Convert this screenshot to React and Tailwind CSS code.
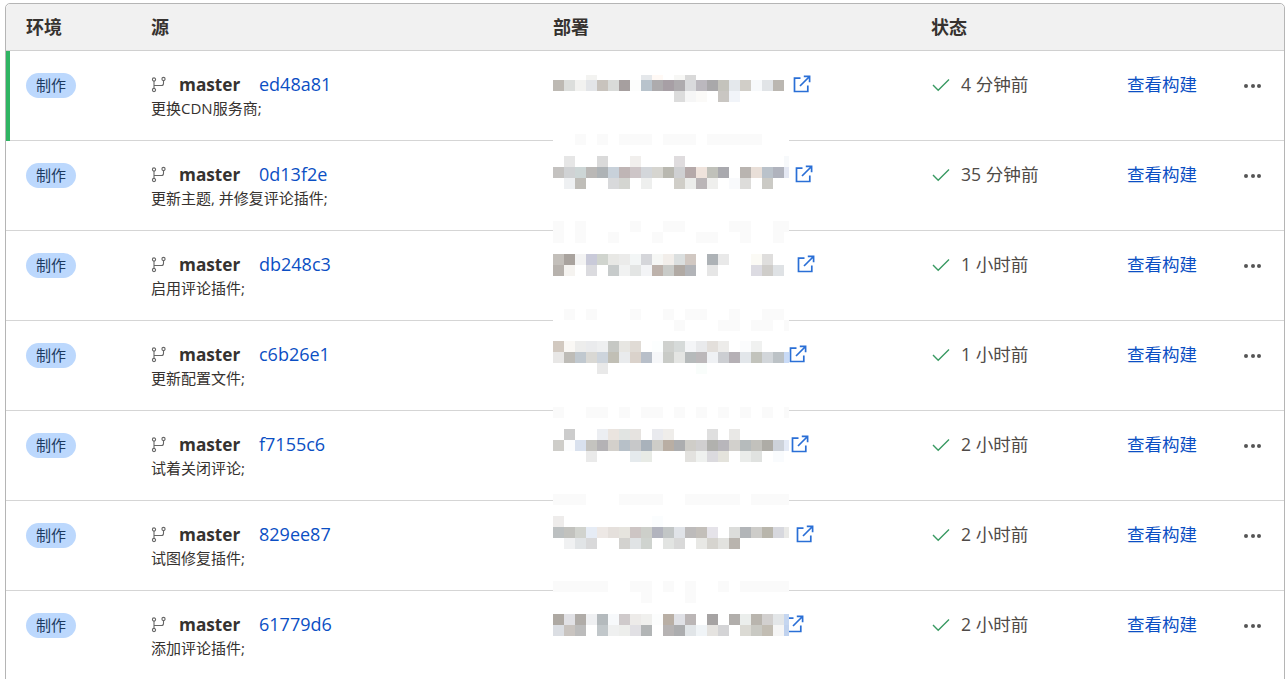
const FONT = "font-['Open_Sans','Noto_Sans_CJK_SC',sans-serif]";

// pixelated url blocks, each band: y from row top, cells by column
const MASK = '#fafafa';
const W = 236;

const ROWS = [
    {
        hash: 'ed48a81', msg: '更换CDN服务商;', time: '4 分钟前', gap: 'w-[240px]',
        masks: [],
        bands: [
            [24, 5, { 3: 'f3f3f1', 8: 'e5e8eb', 9: 'fff9f5', 11: 'f7f7f5', 12: 'd9d9d9' }],
            [29, 11, 'bdb9b3 dcdedc f2f2f0 e3e5e8 c8c3bd d9dbd9 a69f9f fcfdfc b8c3cc adabad a79fa5 aeabae d9dadc bbb8be a9a8aa c4c3bc e4e8ec d1cec8 f7f9fb e1e4e7 bbb7b1'],
            [40, 11, { 11: 'dcdcdc', 12: 'f6f6f6', 13: 'fbfaf8', 15: 'c9c6c2', 16: 'f1f4f9' }],
        ],
    },
    {
        hash: '0d13f2e', msg: '更新主题, 并修复评论插件;', time: '35 分钟前', gap: 'w-[242px]',
        masks: [[-7, [2, 4, 6, 7, 8, 10, 11, 12, 14, 15, 16, 17, 18]]],
        bands: [
            [15, 11, { 1: 'e6e6e6', 4: 'dadada', 7: 'f1efed', 11: 'dfdcde', 21: 'f7f9fb' }],
            [26, 11, 'c4c2c0 d0d2d4 cdd6d6 bab8b6 aeb3b6 c8d1da bfb5b5 cdc5c7 d3d6da d6d5d0 b9b8b0 cfd0d2 b5a9a9 efe3dc c0c1ba a9a9ae ffffff b9b4b0 e9dfd8 bac2ca b0b3bd e4e8f3'],
            [37, 11, { 1: 'eef0f2', 2: 'bfbdb8', 5: 'd8d9db', 6: 'd4d5d1', 8: 'eeefee', 11: 'd0cec8', 12: 'ecedeb', 13: 'bab5b7', 14: 'efefed', 16: 'f9fafc', 17: 'dddcda', 19: 'cbcac5' }],
        ],
    },
    {
        hash: 'db248c3', msg: '启用评论插件;', time: '1 小时前', gap: 'w-[244px]',
        masks: [[-10, [0, 2, 7, 10, 11, 16, 17, 20, 21]], [1, [0, 2, 5, 9, 13, 14, 17, 20]]],
        bands: [
            [23, 11, 'c3bfba a9a39e f3f3f3 c9cad9 d0d4ce e8e8e5 ebebea f3f6f6 d5d6da f6f7f5 f2eeea dbdfdf d1c8c2 ffffff adb2b6 e9e9e9 ffffff ffffff fbfaf5 dfdedd ffffff'],
            [34, 11, 'b7b2ad f5f3f0 ffffff dbdbdf ffffff c7cbcb f1f2f2 e3e5e4 f3f4f6 bdb2ab c9cbc8 b1aaa4 b2b4b8 ffffff e6e6e6 ffffff ffffff ffffff dcdbe2 cfcdca dfe2e5'],
        ],
    },
    {
        hash: 'c6b26e1', msg: '更新配置文件;', time: '1 小时前', gap: 'w-[236px]',
        masks: [[-12, [1, 3, 7, 10, 12, 13, 16, 19, 20]], [-1, [11, 15, 16, 18, 19, 21]]],
        bands: [
            [20, 11, 'd2c9c0 faf8f5 ededec eaebed eeeff0 c6c8c4 e7e6e2 e0dbd5 ffffff fcfefe cfd1ce d6dad9 f4f5f7 e9eaec e3dfdb edecea ffffff fbfcfd f0f1f0 ffffff ffffff'],
            [31, 11, 'e8e7e6 bebcb7 c0c8cf d9d8d4 cdd4dc c1bfb5 e9ebed dad2cb b8bfc9 f6f7f9 c9cbc7 e4e5e3 b6babb bcb8ba eff1f4 ccced2 b5b0b5 e2e6ea c2c3bc d2d6da bcc2c6 c8daf6'],
            [42, 11, { 4: 'e9e9e9', 13: 'f9fdfb' }],
        ],
    },
    {
        hash: 'f7155c6', msg: '试着关闭评论;', time: '2 小时前', gap: 'w-[238px]',
        masks: [[-4, [0, 3, 4, 6, 8, 9, 11, 13, 15, 17, 19, 21]]],
        bands: [
            [18, 11, { 1: 'cccccc', 4: 'eceef2', 5: 'eae4df', 6: 'e1e4e2', 7: 'e6e3e0', 9: 'e9eaee', 10: 'efedea', 14: 'dfdfdf', 16: 'e9e8e6' }],
            [29, 11, 'cecdc9 fbfcfd d9e1ee c4c3bf b4b2b5 d3d0cb b7c0c8 c7c8c9 a9b2bb cecdc8 b9aea3 acadaf cfcdc8 d0cfd0 b1b1ae b8b6bb d2d0cc b6bbbc c2c1bc aeaca6 cdd2da e4eaf6'],
            [40, 11, { 3: 'eaeaea', 7: 'e5eaed', 8: 'e8ebe6', 12: 'e3e2df', 13: 'eff1ef', 14: 'dbdade', 15: 'e4e3dc', 17: 'eaecea', 18: 'e0e2e0', 20: 'f9fbfd' }],
        ],
    },
    {
        hash: '829ee87', msg: '试图修复插件;', time: '2 小时前', gap: 'w-[243px]',
        masks: [[-7, [0, 1, 2, 6, 7, 8, 9, 12, 13, 14, 15, 16, 18, 19, 20, 21]]],
        bands: [
            [15, 11, { 0: 'eeeceb', 9: 'fbfdfe' }],
            [26, 11, 'bcc0c1 c2c2be d1d3ce e6ecf5 ede8e5 e5e0dc e6e4de cdc5c4 cdcfca b2b4be c2c6c6 e0e3e8 bdbbbb c3bfba e5e3e9 ffffff dcdddb b2b5b8 cdccc9 b9b6ac d7d8de e9e9e7'],
            [37, 11, { 1: 'f0f1f2', 2: 'e1e4e6', 3: 'd9d9da', 6: 'd3d2cf', 7: 'e0e3e5', 8: 'cfd3cf', 10: 'e2e4e2', 11: 'd9d9d9', 13: 'e8e8e5', 14: 'd6d4cf', 15: 'e2e2df', 16: 'b9b4ae' }],
        ],
    },
    {
        hash: '61779d6', msg: '添加评论插件;', time: '2 小时前', gap: 'w-[233px]',
        masks: [[-10, [0, 1, 2, 3, 4, 7, 8, 10, 12, 15, 17, 18, 19, 20, 21]], [1, [8, 12]]],
        bands: [
            [23, 11, 'aea9a3 e1e1e5 b0aca8 eff0f2 b4babd f7f9fb cfcacb edebe9 f0f0ee fcfdfd b9afa5 e0e1e6 bbb6b6 ffffff a6a3a3 ffffff b1aeab ebeeec b9b5ae d2d0cf e3e6e8 c5d6f0'],
            [34, 11, 'dbdee3 c9c4c0 bcbcbc ffffff c1c7ca eff0f0 edeeec e1e0e4 b2b5b6 ffffff b6b3b3 acadaf e1e5e8 f0f4f7 e5e3e0 d4d4d6 ffffff dbdad4 c9c9c3 c2bdb3 f5f5f5 c0d2ee'],
        ],
    },
];

function bandCells(cells) {
    if (typeof cells === 'string') return cells.split(' ').map((c, i) => [i, c]);
    return Object.entries(cells).map(([i, c]) => [Number(i), c]);
}

function Mosaic({ masks, bands }) {
    // drawn from 20px above the row so it can cover the divider
    const off = 20;
    return (
        <svg className="absolute left-0 z-10" style={{ top: -22 - off }} width={W} height={110} aria-hidden="true">
            {masks.map(([y, cols], m) => (
                <g key={m}>
                    <rect x="0" y={y + off} width={W} height="11" fill="#fff" />
                    {cols.map((c) => (
                        <rect key={c} x={c * 11} y={y + off} width={c === 21 ? 5 : 11} height="11" fill={MASK} />
                    ))}
                </g>
            ))}
            {bands.map(([y, h, cells], b) =>
                bandCells(cells).map(([c, color]) => (
                    <rect key={`${b}-${c}`} x={c * 11} y={y + off} width={c === 21 ? 5 : 11} height={h} fill={`#${color}`} />
                )),
            )}
        </svg>
    );
}

function BranchIcon() {
    return (
        <svg width="16" height="17" viewBox="0 0 16 17" fill="none" stroke="#666" strokeWidth="1.1" className="mt-[3px] shrink-0">
            <circle cx="3" cy="3.5" r="1.6" />
            <circle cx="3" cy="14" r="1.6" />
            <circle cx="12.5" cy="3" r="1.6" />
            <path d="M3 5.1v7.3M3 9.5h7.5a2 2 0 0 0 2-2V4.6" />
        </svg>
    );
}

function ExternalIcon() {
    return (
        <svg width="18" height="18" viewBox="0 0 18 18" fill="none" stroke="#2a6fd6" strokeWidth="1.7" className="mt-[2px] shrink-0">
            <path d="M7.5 3.2H1.5v13.3h13.3v-6" />
            <path d="M7 11 16 2M10.8 1.4h5.8v5.8" />
        </svg>
    );
}

function CheckIcon() {
    return (
        <svg width="18" height="14" viewBox="0 0 18 14" fill="none" stroke="#3a9a63" strokeWidth="1.4" className="ml-px">
            <path d="M1 7l5.2 5.2L17 1.6" />
        </svg>
    );
}

function Row({ row, live }) {
    return (
        <div className="relative grid h-[90px] grid-cols-[125px_402px_378px_196px_1fr] border-b border-[#d5d5d5] pl-5 pt-[22px]">
            {live && <div className="absolute -bottom-px left-0 top-0 w-1 bg-[#2fb463]" />}
            <div>
                <span className="inline-flex h-[25px] w-[50px] items-center justify-center rounded-full bg-[#bcd8fd] text-[15px] text-[#1d3a5f]">
                    制作
                </span>
            </div>
            <div>
                <div className="flex h-[25px] items-start">
                    <BranchIcon />
                    <span className="ml-[12px] w-[60px] text-[17.2px] font-bold leading-[23px] text-[#36322f]">master</span>
                    <a className="ml-5 text-[18px] leading-[23px] text-[#0b4fc4]">{row.hash}</a>
                </div>
                <div className="text-[15px] leading-[20px] text-[#36322f]">{row.msg}</div>
            </div>
            <div className="relative">
                <Mosaic masks={row.masks} bands={row.bands} />
                <div className="flex h-[22px] items-start">
                    <div className={row.gap} />
                    <ExternalIcon />
                </div>
            </div>
            <div className="flex h-[23px] items-center">
                <CheckIcon />
                <span className="ml-[11px] text-[17.6px] leading-[23px] text-[#4f4b47]">{row.time}</span>
            </div>
            <div className="flex h-[23px] items-center">
                <a className="text-[17.5px] leading-[23px] text-[#0b4fc4]">查看构建</a>
                <span className="ml-[47px] mt-[3px] flex gap-[2.5px]">
                    <i className="size-[4px] rounded-full bg-[#555]" />
                    <i className="size-[4px] rounded-full bg-[#555]" />
                    <i className="size-[4px] rounded-full bg-[#555]" />
                </span>
            </div>
        </div>
    );
}

export default function App() {
    return (
        <div className={`h-[679px] overflow-hidden bg-white pl-[5px] pr-[1px] pt-[3px] ${FONT}`}>
            <div className="h-[700px] rounded-t-[5px] border border-[#b5b5b5]">
                <div className="grid h-[47px] grid-cols-[125px_402px_378px_196px_1fr] items-center rounded-t-[5px] border-b border-[#d0d0d0] bg-[#f1f1f1] pl-5 text-[18px] font-bold text-[#36322f]">
                    <div>环境</div>
                    <div>源</div>
                    <div>部署</div>
                    <div>状态</div>
                </div>
                {ROWS.map((row, i) => (
                    <Row key={row.hash} row={row} live={i === 0} />
                ))}
            </div>
        </div>
    );
}
